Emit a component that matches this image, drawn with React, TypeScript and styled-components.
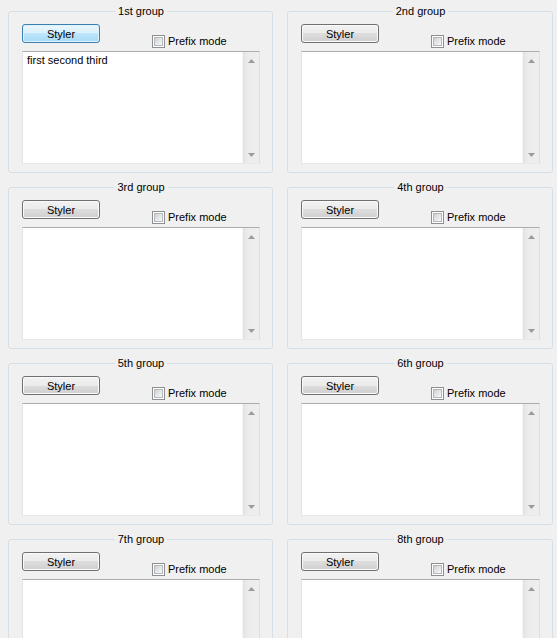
import styled, { createGlobalStyle } from "styled-components";

const GlobalStyle = createGlobalStyle`
  html, body {
    margin: 0;
    padding: 0;
    background: #f0f0f0;
  }
  body {
    font-family: "Liberation Sans", Arial, sans-serif;
    font-size: 11px;
    color: #000;
  }
`;

const groups = [
  { title: "1st group", text: "first second third", isDefault: true },
  { title: "2nd group", text: "" },
  { title: "3rd group", text: "" },
  { title: "4th group", text: "" },
  { title: "5th group", text: "" },
  { title: "6th group", text: "" },
  { title: "7th group", text: "" },
  { title: "8th group", text: "" },
];

const Page = styled.div`
  display: grid;
  grid-template-columns: 265px 266px;
  column-gap: 14px;
  row-gap: 8px;
  padding: 5px 0 0 8px;
`;

const GroupBox = styled.fieldset`
  margin: 0;
  min-inline-size: 0;
  padding: 6px 12px 8px 13px;
  border: 1px solid #d5dfe5;
  border-radius: 3px;
`;

const Title = styled.legend`
  margin: 0 auto;
  padding: 0 3px;
  font-size: 11px;
  line-height: 13px;
`;

const Controls = styled.div`
  display: flex;
  align-items: flex-start;
  height: 27px;
`;

const Button = styled.button<{ $default?: boolean }>`
  width: 78px;
  height: 19px;
  box-sizing: border-box;
  padding: 0;
  font-family: inherit;
  font-size: 11px;
  color: #000;
  border-radius: 3px;
  border: 1px solid ${(p) => (p.$default ? "#3c7fb1" : "#707070")};
  background: ${(p) =>
    p.$default
      ? "linear-gradient(#eaf6fd 0%, #d9f0fc 50%, #bee6fd 50%, #a7d9f5 100%)"
      : "linear-gradient(#f2f2f2 0%, #ebebeb 50%, #dddddd 50%, #cfcfcf 100%)"};
  box-shadow: inset 0 0 0 1px ${(p) => (p.$default ? "#dff3fe" : "#fbfbfb")};
  cursor: pointer;
`;

const CheckLabel = styled.label`
  display: flex;
  align-items: center;
  gap: 3px;
  margin: 11px 0 0 52px;
  line-height: 13px;
  font-size: 11px;
`;

const Box = styled.span`
  width: 13px;
  height: 13px;
  box-sizing: border-box;
  border: 1px solid #8e8f8f;
  background: #fff;
  padding: 1px;
  display: flex;
`;

const BoxInner = styled.span`
  flex: 1;
  background: linear-gradient(135deg, #cbcfd5 0%, #e4e6e8 50%, #f6f6f6 100%);
  border: 1px solid #b4b8bc;
`;

const Editor = styled.div`
  display: flex;
  height: 113px;
  box-sizing: border-box;
  border: 1px solid;
  border-color: #abadb3 #dbdfe6 #e3e9ef #e2e3ea;
  background: #fff;
`;

const TextArea = styled.textarea`
  flex: 1;
  margin: 0;
  border: 0;
  outline: none;
  resize: none;
  overflow: hidden;
  padding: 2px 4px;
  font-family: inherit;
  font-size: 11px;
  line-height: 13px;
  background: transparent;
  color: #000;
`;

const ScrollBar = styled.div`
  width: 17px;
  box-sizing: border-box;
  display: flex;
  flex-direction: column;
  justify-content: space-between;
  background: linear-gradient(to right, #e3e3e3, #ececec 30%, #efefef);
  border-left: 1px solid #f7f7f7;
`;

const ArrowButton = styled.div`
  height: 17px;
  display: flex;
  align-items: center;
  justify-content: center;
`;

const Arrow = ({ down }: { down?: boolean }) => (
  <svg width="7" height="4" viewBox="0 0 7 4">
    <polygon
      points={down ? "0,0 7,0 3.5,4" : "3.5,0 7,4 0,4"}
      fill="#9c9c9c"
    />
  </svg>
);

export default function App() {
  return (
    <>
      <GlobalStyle />
      <Page>
        {groups.map((g) => (
          <GroupBox key={g.title}>
            <Title>{g.title}</Title>
            <Controls>
              <Button $default={g.isDefault}>Styler</Button>
              <CheckLabel>
                <Box>
                  <BoxInner />
                </Box>
                Prefix mode
              </CheckLabel>
            </Controls>
            <Editor>
              <TextArea defaultValue={g.text} />
              <ScrollBar>
                <ArrowButton>
                  <Arrow />
                </ArrowButton>
                <ArrowButton>
                  <Arrow down />
                </ArrowButton>
              </ScrollBar>
            </Editor>
          </GroupBox>
        ))}
      </Page>
    </>
  );
}
